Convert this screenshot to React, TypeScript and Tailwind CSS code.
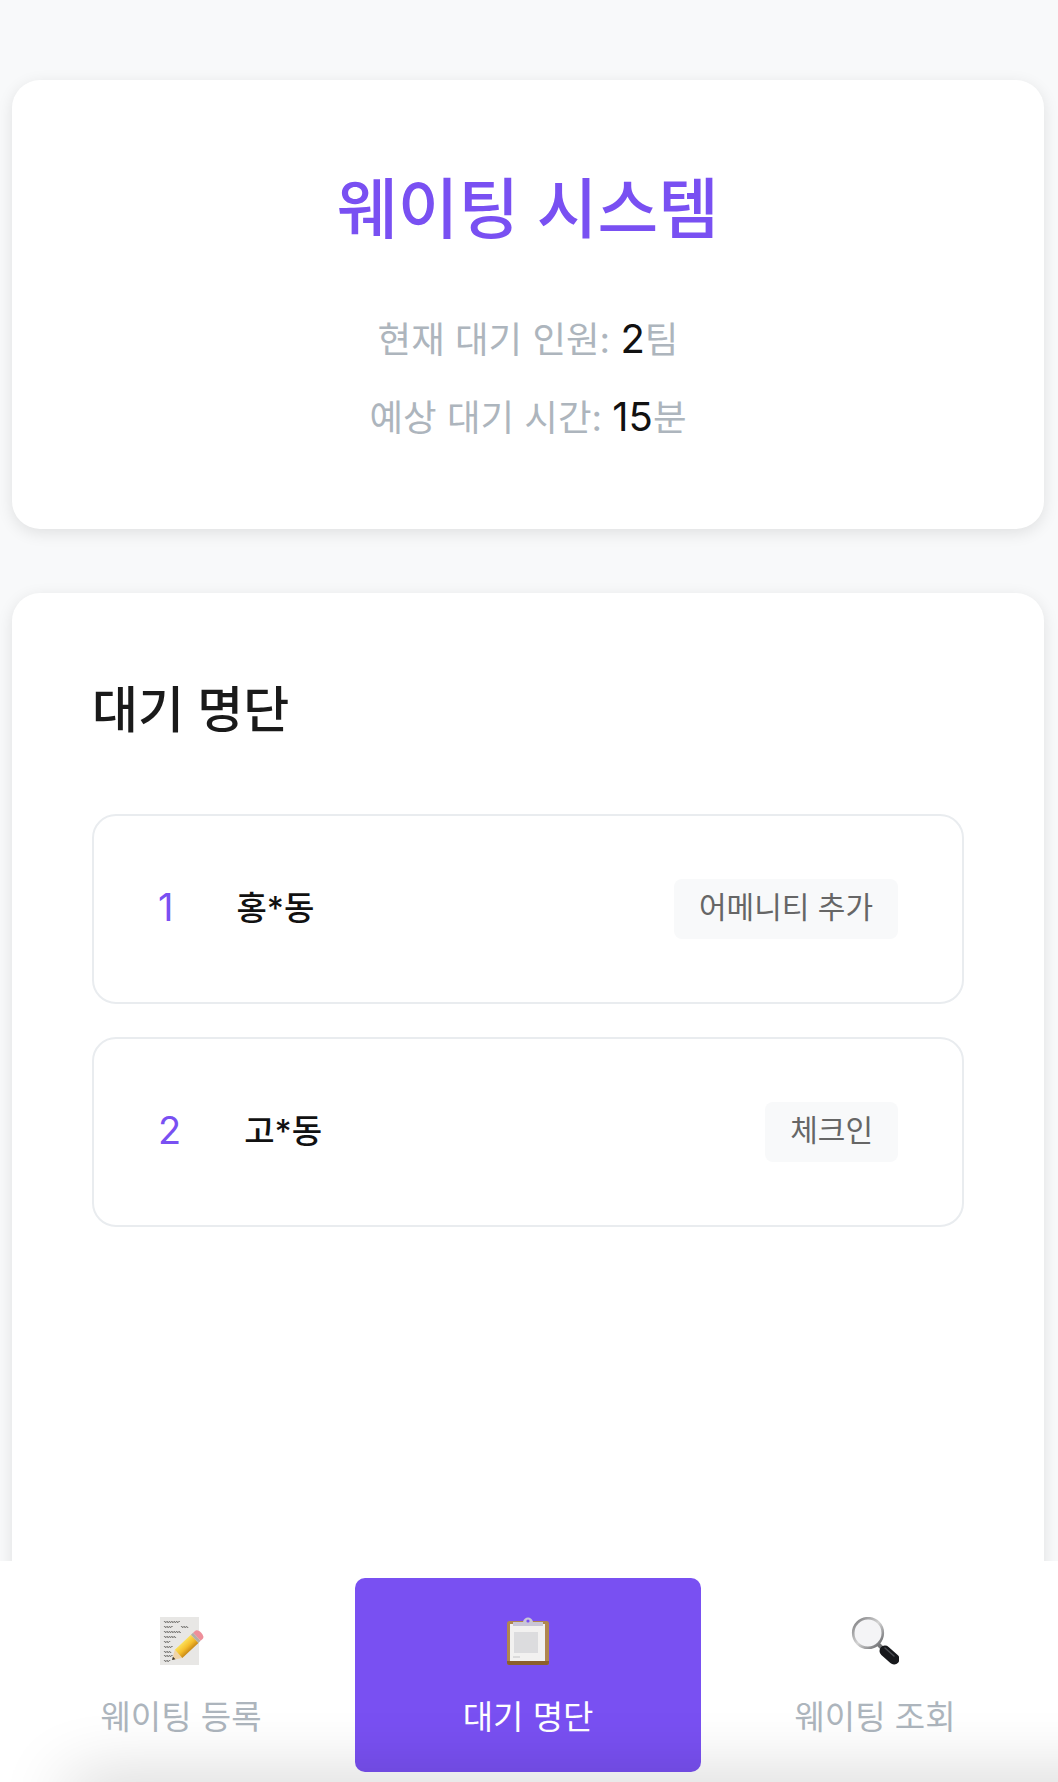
import React from 'react';

const FONT = "font-['Inter','Noto_Sans_CJK_KR',sans-serif]";

// handwriting on the memo: [y, x, number of wiggles]
const scribbles = [
  [5, 4, 12], [10, 4, 6], [10, 21, 5], [15, 4, 13], [20, 4, 9], [25, 4, 4],
  [30, 4, 6], [35, 4, 5], [39, 4, 6], [44, 4, 4],
];

const MemoIcon = () => (
  <svg width="46" height="48" viewBox="0 0 46 48" className="ml-1">
    <defs>
      <linearGradient id="pencil" x1="0" y1="0" x2="0" y2="1">
        <stop offset="0" stopColor="#fbe05a" />
        <stop offset="0.55" stopColor="#f5bd2a" />
        <stop offset="1" stopColor="#c98a18" />
      </linearGradient>
    </defs>
    <rect x="0" y="0" width="39" height="48" fill="#e8e7e5" />
    <g stroke="#4f4d4a" strokeWidth="0.6" fill="none">
      {scribbles.map(([y, x, n]) => (
        <path key={`${y}-${x}`} d={`M${x} ${y}q1 -2 1.2 0` + 't1.2 0'.repeat(n)} />
      ))}
    </g>
    <g transform="translate(12 43) rotate(-43)">
      <path d="M9 -5.5L0 0L9 5.5z" fill="#f0d4a8" />
      <path d="M3 -1.8L0 0L3 1.8z" fill="#3a342e" />
      <rect x="9" y="-5.5" width="22" height="11" fill="url(#pencil)" />
      <rect x="31" y="-5.5" width="3" height="11" fill="#b3aea6" />
      <path d="M34 -5.5h3a3 5.5 0 0 1 0 11h-3z" fill="#ee8f9a" />
    </g>
  </svg>
);

const ClipboardIcon = () => (
  <svg width="42" height="48" viewBox="0 0 42 48">
    <rect x="0" y="4" width="42" height="44" rx="2.5" fill="#b0864f" />
    <rect x="3" y="7" width="35" height="37" fill="#f2f1f0" />
    <rect x="7" y="15" width="24" height="21" fill="#dcdcde" />
    <path d="M6 40h7" stroke="#c4c4c6" strokeWidth="1" />
    <path d="M6 9V5h10c1 -6 9 -6 10 0h10v4z" fill="#c9c6d6" />
    <circle cx="21" cy="4" r="1.6" fill="#7950f2" />
    <path d="M0 44h42v1.5a2.5 2.5 0 0 1 -2.5 2.5h-37a2.5 2.5 0 0 1 -2.5 -2.5z" fill="#8c5f2b" />
  </svg>
);

const SearchIcon = () => (
  <svg width="48" height="48" viewBox="0 0 48 48">
    <defs>
      <linearGradient id="rim" x1="0" y1="0" x2="1" y2="1">
        <stop offset="0" stopColor="#77777a" />
        <stop offset="0.5" stopColor="#d4d4d4" />
        <stop offset="1" stopColor="#5a5b5f" />
      </linearGradient>
    </defs>
    <path d="M27 27l5 5" stroke="#77787a" strokeWidth="4" />
    <path d="M34 34l9 8" stroke="#17181c" strokeWidth="11" strokeLinecap="round" />
    <path d="M34 31l9 8" stroke="#4b4d52" strokeWidth="1.5" strokeLinecap="round" />
    <circle cx="17" cy="16" r="14.8" fill="#f4f4f6" stroke="url(#rim)" strokeWidth="2.6" />
  </svg>
);

const waitList = [
  { no: 1, name: '홍*동', action: '어메니티 추가' },
  { no: 2, name: '고*동', action: '체크인' },
];

const tabs = [
  { label: '웨이팅 등록', icon: <MemoIcon />, active: false },
  { label: '대기 명단', icon: <ClipboardIcon />, active: true },
  { label: '웨이팅 조회', icon: <SearchIcon />, active: false },
];

export default function App() {
  return (
    <div className={`${FONT} relative h-[1782px] overflow-hidden bg-[#f8f9fa] pl-3 pr-[14px] pt-20`}>
      {/* status card */}
      <section className="flex h-[449px] flex-col items-center rounded-[28px] bg-white pt-[91px] shadow-[0_4px_16px_rgba(0,0,0,0.1)]">
        <h1 className="text-[66px] leading-[76px] font-medium text-[#7950f2]">웨이팅 시스템</h1>
        <p className="mt-[65px] text-[36.5px] leading-[54px] text-[#adb5bd]">
          현재 대기 인원: <span className="text-[40px] text-[#111111]">2</span>팀
        </p>
        <p className="mt-[23px] text-[36.5px] leading-[54px] text-[#adb5bd]">
          예상 대기 시간: <span className="text-[40px] text-[#111111]">15</span>분
        </p>
      </section>

      {/* wait list */}
      <section className="mt-16 h-[1300px] rounded-[28px] bg-white px-20 pt-[86px] shadow-[0_4px_16px_rgba(0,0,0,0.1)]">
        <h2 className="text-[50px] leading-[62px] font-medium text-[#1a1a1a]">대기 명단</h2>
        <div className="mt-[73px] flex flex-col gap-[33px]">
          {waitList.map(row => (
            <div
              key={row.no}
              className="flex h-[190px] items-center justify-between rounded-[24px] border-2 border-[#e9ecef] px-16"
            >
              <div className="flex items-center gap-[63px]">
                <span className="pb-[3px] text-[38px] text-[#7950f2]">{row.no}</span>
                <span className="text-[33px] font-medium text-[#111111]">{row.name}</span>
              </div>
              <button className="h-[60px] rounded-lg bg-[#f8f9fa] px-[25px] pb-1 text-[30px] text-[#666666]">
                {row.action}
              </button>
            </div>
          ))}
        </div>
      </section>

      {/* bottom tabs */}
      <nav className="absolute inset-x-0 bottom-0 flex h-[221px] gap-px bg-white pb-[10px] pl-2 pt-[17px]">
        {tabs.map(tab => (
          <a
            key={tab.label}
            className={`flex w-[346px] flex-col items-center rounded-[10px] pt-[39px] text-[33px] leading-[48px] ${
              tab.active ? 'bg-[#7950f2] text-white' : 'text-[#adb5bd]'
            }`}
          >
            <span className="flex h-[48px] items-center">{tab.icon}</span>
            <span className="mt-[28px]">{tab.label}</span>
          </a>
        ))}
      </nav>
      {/* shadow coming up from below the page */}
      <div className="pointer-events-none absolute -bottom-[42px] -right-[100px] left-[70px] h-[40px] shadow-[0_0_70px_rgba(0,0,0,0.24)]" />
    </div>
  );
}
